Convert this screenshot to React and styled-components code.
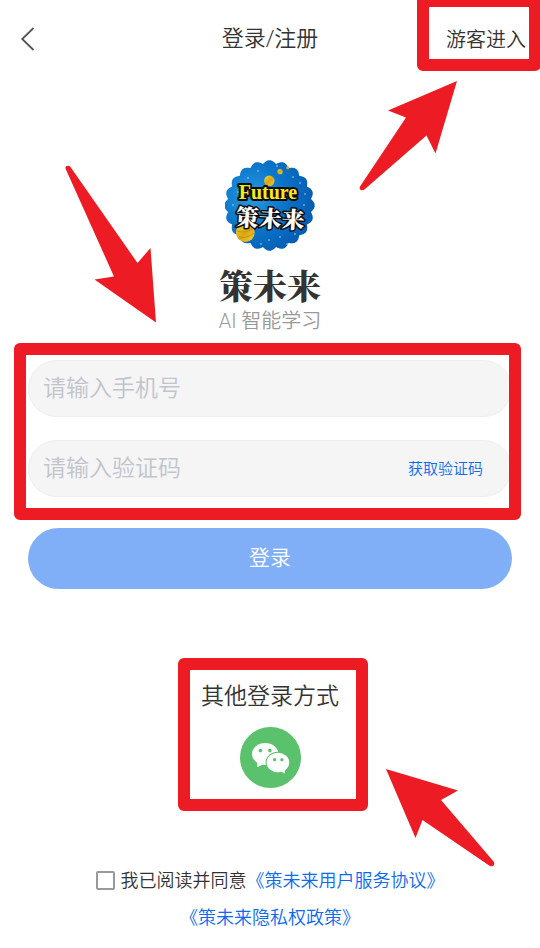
import React from "react";
import styled, { createGlobalStyle } from "styled-components";

const RED = "#ed1c24";
const BLUE = "#0a6af5";
const INK = "#333333";

const GlobalStyle = createGlobalStyle`
  *, *::before, *::after { box-sizing: border-box; }
  body {
    margin: 0;
    background: #ffffff;
    color: ${INK};
    font-family: Roboto, "Noto Sans CJK SC", sans-serif;
    font-weight: 350;
    overflow-x: hidden;
  }
  button, input { font-family: inherit; font-weight: inherit; }
  button { border: 0; padding: 0; background: none; cursor: pointer; }
`;

const Page = styled.main`
  display: flex;
  flex-direction: column;
  overflow: hidden;
`;

const Header = styled.header`
  position: relative;
  display: grid;
  grid-template-columns: 1fr auto 1fr;
  align-items: center;
  height: 78px;
  padding: 0 14px;
`;

const BackButton = styled.button`
  display: flex;
  justify-self: start;
  padding: 0 6px;
`;

const HeaderTitle = styled.h1`
  margin: 0;
  font-size: 22px;
  font-weight: inherit;
  line-height: 32px;
`;

const GuestButton = styled.button`
  justify-self: end;
  padding-top: 2px;
  color: ${INK};
  font-size: 20px;
  line-height: 32px;
`;

/* Red annotation frame laid over the part it marks. */
const Highlight = styled.span`
  position: absolute;
  top: ${(p) => p.$top}px;
  right: ${(p) => p.$right}px;
  bottom: ${(p) => p.$bottom}px;
  left: ${(p) => (p.$left === undefined ? "auto" : `${p.$left}px`)};
  width: ${(p) => (p.$width ? `${p.$width}px` : "auto")};
  border: 12px solid ${RED};
  border-radius: 6px;
  pointer-events: none;
`;

const ArrowSvg = styled.svg`
  position: absolute;
  top: ${(p) => p.$top}px;
  left: ${(p) => (p.$left === undefined ? "auto" : `${p.$left}px`)};
  right: ${(p) => (p.$right === undefined ? "auto" : `${p.$right}px`)};
  fill: ${RED};
  pointer-events: none;
`;

const Brand = styled.section`
  position: relative;
  display: flex;
  flex-direction: column;
  align-items: center;
  padding-top: 82px;
`;

const BrandName = styled.h2`
  margin: 10px 0 0;
  font-family: "Noto Serif CJK SC", "Noto Sans CJK SC", serif;
  font-size: 34px;
  font-weight: 900;
  line-height: 48px;
`;

const Tagline = styled.p`
  margin: 0;
  color: #999999;
  font-size: 20px;
  line-height: 24px;
`;

const LoginForm = styled.form`
  display: flex;
  flex-direction: column;
  gap: 31px;
  margin-top: 27px;
  padding: 0 28px;
`;

const Fields = styled.div`
  position: relative;
  display: flex;
  flex-direction: column;
  gap: 23px;
`;

const Field = styled.div`
  display: flex;
  align-items: center;
  height: 57px;
  padding: 0 28px 0 14px;
  border: 1px solid #eeeeee;
  border-radius: 29px;
  background: #f5f5f5;
`;

const TextInput = styled.input`
  flex: 1;
  min-width: 0;
  height: 36px;
  padding: 0;
  border: 0;
  outline: 0;
  background: transparent;
  color: ${INK};
  font-size: 23px;
  &::placeholder { color: #c0c4cc; opacity: 1; }
`;

const CodeButton = styled.button`
  color: ${BLUE};
  font-size: 15px;
  line-height: 24px;
`;

const SubmitButton = styled.button`
  height: 61px;
  padding-bottom: 5px;
  border-radius: 31px;
  background: #80aff8;
  color: #ffffff;
  font-size: 21px;
`;

const OtherLogin = styled.section`
  position: relative;
  display: flex;
  flex-direction: column;
  align-items: center;
  align-self: center;
  gap: 13px;
  margin-top: 91px;
`;

const OtherTitle = styled.h3`
  margin: 0;
  font-size: 23px;
  font-weight: inherit;
  line-height: 34px;
`;

const WeChatButton = styled.button`
  display: flex;
  border-radius: 50%;
`;

const Agreement = styled.footer`
  display: flex;
  flex-direction: column;
  align-items: center;
  margin-top: 74px;
  font-size: 18px;
  line-height: 37px;
`;

const AgreementRow = styled.div`
  display: flex;
  align-items: center;
`;

const CheckLabel = styled.label`
  display: flex;
  align-items: center;
  gap: 6px;
`;

const CheckBox = styled.input`
  appearance: none;
  width: 19px;
  height: 19px;
  margin: 0;
  border: 2px solid #999999;
  border-radius: 2px;
  background: #ffffff;
  &:checked { background: ${BLUE}; }
`;

const PolicyLink = styled.a`
  color: ${BLUE};
  text-decoration: none;
`;

function scallopedEdge(cx, cy, inner, depth, bumps) {
  const steps = bumps * 16;
  const points = Array.from({ length: steps }, (_, i) => {
    const a = (i / steps) * Math.PI * 2;
    const r = inner + depth * Math.abs(Math.cos((a * bumps) / 2));
    return `${(cx + r * Math.cos(a)).toFixed(2)} ${(cy + r * Math.sin(a)).toFixed(2)}`;
  });
  return `M${points.join("L")}Z`;
}

const STARS = [
  [23, 18], [33, 11], [13, 32], [75, 23], [68, 17], [79, 45], [8, 45],
  [44, 80], [55, 77], [70, 74], [62, 84], [36, 84], [52, 6], [80, 34],
];

function Logo() {
  return (
    <svg width="91" height="91" viewBox="0 0 91 91" role="img" aria-label="策未来">
      <defs>
        <radialGradient id="sky" cx="0.3" cy="0.4" r="0.75">
          <stop offset="0" stopColor="#2a9ae0" />
          <stop offset="0.5" stopColor="#0a74c9" />
          <stop offset="1" stopColor="#0559ae" />
        </radialGradient>
        <linearGradient id="gold" x1="0" y1="0" x2="1" y2="1">
          <stop offset="0" stopColor="#f5dc3c" />
          <stop offset="0.5" stopColor="#d9a514" />
          <stop offset="1" stopColor="#f2d23a" />
        </linearGradient>
      </defs>
      <path d={scallopedEdge(44.5, 45.5, 42, 3.2, 20)} fill="url(#sky)" />
      {STARS.map(([x, y]) => (
        <circle key={`${x}-${y}`} cx={x} cy={y} r="0.8" fill="#a9dcff" />
      ))}
      <g fill="url(#gold)">
        <circle cx="44.3" cy="20.7" r="5.2" />
        <circle cx="55" cy="11.7" r="2.6" />
        <circle cx="62.7" cy="7.7" r="1.5" />
        <circle cx="20.3" cy="72.5" r="9.4" />
      </g>
      <path d="M12 71q8 3 17-3M14 77q8 2 15-4" fill="none" stroke="#c9920f" strokeWidth="1" />
      <g strokeLinejoin="round" paintOrder="stroke" stroke="#0a0a0a">
        <text
          x="43"
          y="39"
          fill="#f7ea1c"
          strokeWidth="4"
          fontSize="20"
          fontWeight="700"
          fontFamily='"Liberation Serif", serif'
          textAnchor="middle"
        >
          Future
        </text>
        <text
          x="45"
          y="67"
          fill="#ffffff"
          strokeWidth="3"
          fontSize="23"
          fontWeight="900"
          fontFamily='"Noto Serif CJK SC", "Noto Sans CJK SC", serif'
          transform="rotate(3 45 62)"
          textAnchor="middle"
        >
          策未来
        </text>
      </g>
    </svg>
  );
}

function WeChatIcon() {
  return (
    <svg width="61" height="61" viewBox="0 0 61 61" aria-hidden="true">
      <circle cx="30.5" cy="30.5" r="30.5" fill="#5ac16c" />
      <g fill="#ffffff">
        <ellipse cx="25.2" cy="27" rx="13.2" ry="11" />
        <path d="M17.5 34L17 40.2L23.5 37.2Z" />
      </g>
      <ellipse cx="37.9" cy="35.5" rx="12.3" ry="10.8" fill="#5ac16c" />
      <g fill="#ffffff">
        <ellipse cx="37.9" cy="35.5" rx="11.3" ry="9.8" />
        <path d="M40.5 44.6L45.2 46.6L44.6 41.5Z" />
      </g>
      <g fill="#5ac16c">
        <circle cx="20.4" cy="23.6" r="1.8" />
        <circle cx="29.9" cy="23.6" r="1.8" />
        <circle cx="34.6" cy="32.7" r="1.6" />
        <circle cx="41.9" cy="32.7" r="1.6" />
      </g>
    </svg>
  );
}

export default function App() {
  return (
    <>
      <GlobalStyle />
      <Page>
        <Header>
          <BackButton type="button" aria-label="返回">
            <svg width="16" height="24" viewBox="0 0 16 24" fill="none" stroke="#555555" strokeWidth="1.8">
              <path d="M13.5 1L2.2 12L13.5 23" />
            </svg>
          </BackButton>
          <HeaderTitle>登录/注册</HeaderTitle>
          <GuestButton type="button">游客进入</GuestButton>
          <Highlight $top={-5} $right={-1} $bottom={7} $width={124} />
          <ArrowSvg $top={81} $right={82} width="99" height="110" viewBox="0 0 99 110" aria-hidden="true">
            <path d="M98 0L29 29.5L47 36.5L1 105.5Q0 108 2 109Q4 110 6 108L67.5 54.5L76.5 72.5Z" />
          </ArrowSvg>
        </Header>

        <Brand>
          <ArrowSvg $top={87} $left={65} width="92" height="158" viewBox="0 0 92 158" aria-hidden="true">
            <path d="M.7 4Q0 2 1.5 1Q4 0 5.5 2L72.5 98L85.5 83L91 157.500L29.5 114.5L49 111.5Z" />
          </ArrowSvg>
          <Logo />
          <BrandName>策未来</BrandName>
          <Tagline>AI 智能学习</Tagline>
        </Brand>

        <LoginForm onSubmit={(e) => e.preventDefault()}>
          <Fields>
            <Field>
              <TextInput type="tel" aria-label="手机号" placeholder="请输入手机号" />
            </Field>
            <Field>
              <TextInput type="text" aria-label="验证码" placeholder="请输入验证码" />
              <CodeButton type="button">获取验证码</CodeButton>
            </Field>
            <Highlight $top={-17} $right={-9} $bottom={-23} $left={-14} />
          </Fields>
          <SubmitButton type="submit">登录</SubmitButton>
        </LoginForm>

        <OtherLogin>
          <OtherTitle>其他登录方式</OtherTitle>
          <WeChatButton type="button" aria-label="微信登录">
            <WeChatIcon />
          </WeChatButton>
          <Highlight $top={-22} $right={-29} $bottom={-23} $left={-23} />
          <ArrowSvg $top={89} $left={185} width="109" height="98" viewBox="0 0 109 98" aria-hidden="true">
            <path d="M0 0L72 21.5L55 31L108 93Q109 95 107.5 96.5Q106 98 103.5 96.7L36.5 51L29.5 69Z" />
          </ArrowSvg>
        </OtherLogin>

        <Agreement>
          <AgreementRow>
            <CheckLabel>
              <CheckBox type="checkbox" />
              我已阅读并同意
            </CheckLabel>
            <PolicyLink href="#service">《策未来用户服务协议》</PolicyLink>
          </AgreementRow>
          <PolicyLink href="#privacy">《策未来隐私权政策》</PolicyLink>
        </Agreement>
      </Page>
    </>
  );
}
